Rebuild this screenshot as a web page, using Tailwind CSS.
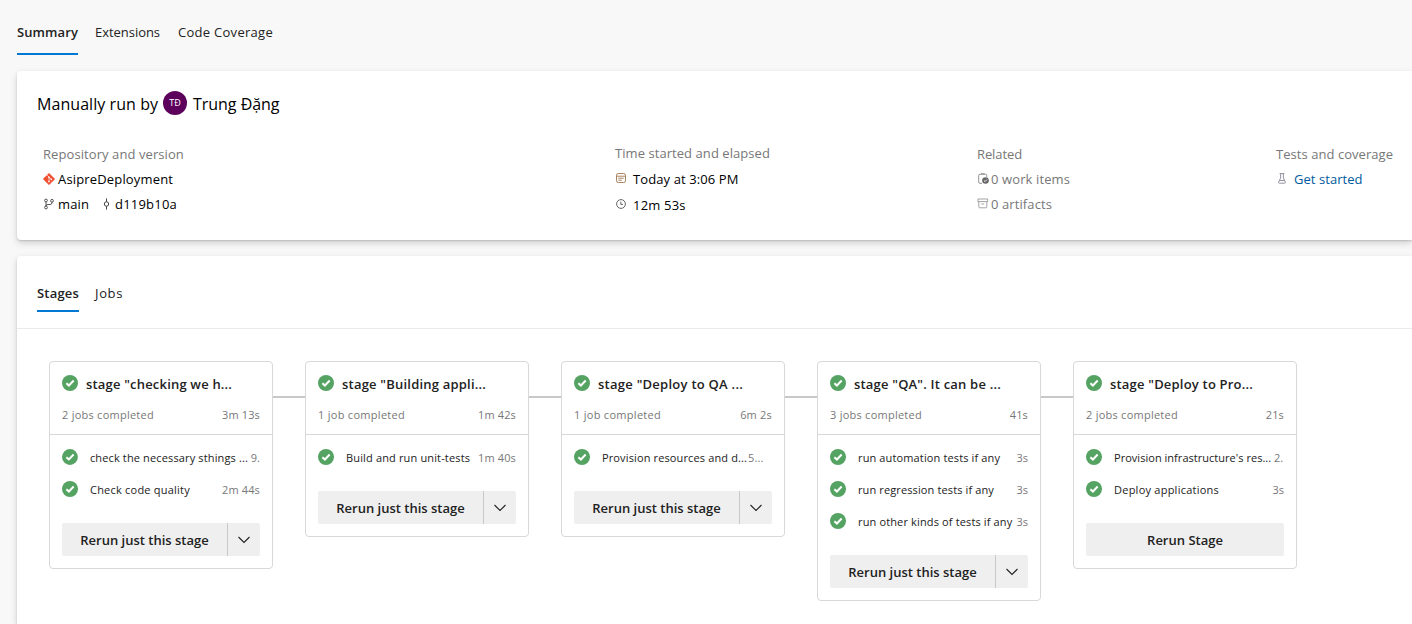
<!DOCTYPE html>
<html lang="en">
<head>
<meta charset="utf-8">
<title>Pipeline run summary</title>
<script src="https://cdn.jsdelivr.net/npm/@tailwindcss/browser@4"></script>
</head>
<body class="h-[624px] w-[1412px] overflow-hidden bg-[#f8f8f8] font-['Open_Sans','Noto_Sans',sans-serif] text-[13px] leading-5 text-black whitespace-nowrap">
<svg class="hidden">
  <symbol id="ok" viewBox="0 0 16 16"><circle cx="8" cy="8" r="8" fill="#55a362"/><path d="M4.4 8.2 6.9 10.5 11.7 5.5" fill="none" stroke="#fff" stroke-width="2"/></symbol>
  <symbol id="chev" viewBox="0 0 12 8"><path d="M.5 1 6 6.5 11.5 1" fill="none" stroke="#222" stroke-width="1.1"/></symbol>
</svg>

<nav class="flex h-[55px] gap-[17px] pl-[17px] pt-[22px] text-[#222]">
  <div class="h-[33px] w-[61px] border-b-2 border-[#0078d4] font-semibold tracking-[.1px]">Summary</div>
  <div class="w-[66px] tracking-[-.04px]">Extensions</div>
  <div class="tracking-[.28px]">Code Coverage</div>
</nav>

<section class="ml-[17px] mt-4 h-[169px] rounded-l bg-white pl-5 pt-5 shadow-[0_3px_7px_rgba(0,0,0,.16),0_1px_2px_rgba(0,0,0,.14)]">
  <div class="flex h-6 items-center text-base leading-6">
    <span class="w-[126px] pt-0.5 tracking-[.06px]">Manually run by</span>
    <span class="flex size-6 items-center justify-center rounded-full bg-[#5c005c] text-[9px] text-white">TĐ</span>
    <span class="ml-1.5 pt-0.5 tracking-[-.03px]">Trung Đặng</span>
  </div>
  <div class="mt-[27px] grid grid-cols-[572px_362px_299px_auto] pl-1.5 leading-[25px]">
    <div>
      <div class="tracking-[.08px] text-[#777]">Repository and version</div>
      <div class="flex items-center"><svg class="mr-[3px] size-3 -translate-y-px" viewBox="0 0 12 12"><path d="M6 .2 11.8 6 6 11.8.2 6Z" fill="#f05133" stroke="#f05133" stroke-width=".5" stroke-linejoin="round"/><path d="M4.2 2.2 6 4v5M6 4.3 8.3 6.4" fill="none" stroke="#fff" stroke-width=".7"/><circle cx="6" cy="4.2" r=".8" fill="#fff"/><circle cx="6" cy="8.6" r=".8" fill="#fff"/><circle cx="8.3" cy="6.4" r=".8" fill="#fff"/></svg><span class="tracking-[.16px]">AsipreDeployment</span></div>
      <div class="flex items-center"><svg class="ml-px mr-1 h-3 w-2.5 -translate-y-px" viewBox="0 0 10 12" fill="none" stroke="#444" stroke-width=".9"><circle cx="2" cy="2.5" r="1.4"/><circle cx="8" cy="2.8" r="1.4"/><circle cx="2" cy="9.5" r="1.4"/><path d="M2 4v4M8 4.2v.6Q8 6.5 6 6.5H4Q2 6.5 2 8"/></svg><span class="w-[43px] tracking-[.12px]">main</span><svg class="ml-0.5 mr-[5px] h-3 w-[7px] -translate-y-px" viewBox="0 0 7 12" fill="none" stroke="#444"><circle cx="3.5" cy="6" r="2.2"/><path d="M3.5.5v3.3M3.5 8.2v3.3"/></svg><span class="tracking-[.21px]">d119b10a</span></div>
    </div>
    <div class="-mt-px">
      <div class="tracking-[.06px] text-[#777]">Time started and elapsed</div>
      <div class="flex h-[26px] items-center"><svg class="ml-px mr-[7px] size-2.5 -translate-y-px" viewBox="0 0 10 10" fill="none" stroke="#a0764f" stroke-width=".9"><rect x=".5" y=".5" width="9" height="9" rx="1.8"/><path d="M.5 3.2h9M2.3 5.2h5.4M2.3 7.2h3.4"/></svg><span class="tracking-[.1px]">Today at 3:06 PM</span></div>
      <div class="flex h-[26px] items-center"><svg class="ml-px mr-[7px] size-2.5 -translate-y-px" viewBox="0 0 10 10" fill="none" stroke="#555" stroke-width=".9"><circle cx="5" cy="5" r="4.4"/><path d="M4.8 2.6v2.8h2.2"/></svg><span class="tracking-[.2px]">12m 53s</span></div>
    </div>
    <div class="text-[#777]">
      <div class="tracking-[-.1px]">Related</div>
      <div class="flex items-center"><svg class="ml-px mr-0.5 h-[11px] w-[11px] -translate-y-px" viewBox="0 0 11 11"><path d="M4 10.3H2A1.3 1.3 0 0 1 .7 9V2.5A1.3 1.3 0 0 1 2 1.2h5.5A1.3 1.3 0 0 1 8.8 2.5V4M3 .8h3.6" fill="none" stroke="#888" stroke-width=".9"/><circle cx="7.5" cy="7.5" r="3.3" fill="#666"/><path d="M6 7.6 7.1 8.6 9 6.5" fill="none" stroke="#fff" stroke-width=".9"/></svg><span class="tracking-[.11px]">0 work items</span></div>
      <div class="flex items-center"><svg class="mr-0.5 h-[11px] w-3 -translate-y-px" viewBox="0 0 12 11" fill="none" stroke="#999" stroke-width=".9"><path d="M.9 1h9.8v2.6H.9zM1.8 3.6V8.8a1 1 0 0 0 1 1h6a1 1 0 0 0 1-1V3.6M4.4 6h2.8"/></svg><span class="tracking-[.1px]">0 artifacts</span></div>
    </div>
    <div>
      <div class="tracking-[.05px] text-[#777]">Tests and coverage</div>
      <div class="flex items-center text-[#005a9e]"><svg class="ml-0.5 mr-2 h-[11px] w-2 -translate-y-px" viewBox="0 0 8 11" fill="none" stroke="#889" stroke-width=".9"><path d="M1.6.6h4.8M2.6.8V5L.6 9.2q-.3 1 .7 1h5.4q1 0 .7-1L5.4 5V.8M1.6 7.5h4.8"/></svg><span class="tracking-[.05px]">Get started</span></div>
    </div>
  </div>
</section>

<section class="ml-[17px] mt-4 h-[368px] rounded-tl bg-white shadow-[0_3px_7px_rgba(0,0,0,.16),0_1px_2px_rgba(0,0,0,.14)]">
  <div class="flex h-[73px] gap-4 border-b border-[#eaeaea] pl-5 pt-[27px] text-[#222]">
    <div class="h-[29px] w-[42px] border-b-2 border-[#0078d4] font-semibold tracking-[.19px]">Stages</div>
    <div class="tracking-[.65px]">Jobs</div>
  </div>

  <div class="flex items-start pl-8 pt-8 text-[11px] text-[#222]">
    <article class="w-56 rounded border border-[#d8d8d8]">
      <header class="h-[73px] border-b border-[#d8d8d8] px-3 pt-3">
        <div class="flex h-5 items-center"><svg class="mr-2 size-4 -translate-y-px"><use href="#ok"/></svg><span class="text-[13px] font-semibold tracking-[.19px]">stage "checking we h...</span></div>
        <div class="mt-[11px] flex justify-between text-[#777]"><span class="tracking-[.25px]">2 jobs completed</span><span class="tracking-[.14px]">3m 13s</span></div>
      </header>
      <div class="px-3 pt-1.5 pb-3">
        <div class="flex h-8 items-center"><svg class="mr-3 size-4"><use href="#ok"/></svg><span class="w-[162px] pt-0.5 tracking-[.14px]">check the necessary sthings ...</span><span class="pt-0.5 text-[#777]">9.</span></div>
        <div class="flex h-8 items-center"><svg class="mr-3 size-4"><use href="#ok"/></svg><span class="flex-1 pt-0.5 tracking-[.22px]">Check code quality</span><span class="pt-0.5 tracking-[.14px] text-[#777]">2m 44s</span></div>
        <div class="mt-[18px] flex h-[33px] items-center rounded-xs bg-[#efefef] text-[13px] font-semibold"><span class="w-[165px] text-center">Rerun just this stage</span><span class="flex h-full flex-1 items-center justify-center border-l border-[#c8c8c8]"><svg class="h-2 w-3"><use href="#chev"/></svg></span></div>
      </div>
    </article>
    <div class="mt-[35px] h-0.5 w-8 bg-[#c8c8c8]"></div>

    <article class="w-56 rounded border border-[#d8d8d8]">
      <header class="h-[73px] border-b border-[#d8d8d8] px-3 pt-3">
        <div class="flex h-5 items-center"><svg class="mr-2 size-4 -translate-y-px"><use href="#ok"/></svg><span class="text-[13px] font-semibold tracking-[.21px]">stage "Building appli...</span></div>
        <div class="mt-[11px] flex justify-between text-[#777]"><span class="tracking-[.29px]">1 job completed</span><span class="tracking-[.14px]">1m 42s</span></div>
      </header>
      <div class="px-3 pt-1.5 pb-3">
        <div class="flex h-8 items-center"><svg class="mr-3 size-4"><use href="#ok"/></svg><span class="flex-1 pt-0.5 tracking-[.15px]">Build and run unit-tests</span><span class="pt-0.5 tracking-[.14px] text-[#777]">1m 40s</span></div>
        <div class="mt-[18px] flex h-[33px] items-center rounded-xs bg-[#efefef] text-[13px] font-semibold"><span class="w-[165px] text-center">Rerun just this stage</span><span class="flex h-full flex-1 items-center justify-center border-l border-[#c8c8c8]"><svg class="h-2 w-3"><use href="#chev"/></svg></span></div>
      </div>
    </article>
    <div class="mt-[35px] h-0.5 w-8 bg-[#c8c8c8]"></div>

    <article class="w-56 rounded border border-[#d8d8d8]">
      <header class="h-[73px] border-b border-[#d8d8d8] px-3 pt-3">
        <div class="flex h-5 items-center"><svg class="mr-2 size-4 -translate-y-px"><use href="#ok"/></svg><span class="text-[13px] font-semibold tracking-[.26px]">stage "Deploy to QA ...</span></div>
        <div class="mt-[11px] flex justify-between text-[#777]"><span class="tracking-[.29px]">1 job completed</span><span class="tracking-[.2px]">6m 2s</span></div>
      </header>
      <div class="px-3 pt-1.5 pb-3">
        <div class="flex h-8 items-center"><svg class="mr-3 size-4"><use href="#ok"/></svg><span class="w-[146px] pt-0.5 tracking-[.13px]">Provision resources and d...</span><span class="pt-0.5 tracking-[.14px] text-[#777]">5...</span></div>
        <div class="mt-[18px] flex h-[33px] items-center rounded-xs bg-[#efefef] text-[13px] font-semibold"><span class="w-[165px] text-center">Rerun just this stage</span><span class="flex h-full flex-1 items-center justify-center border-l border-[#c8c8c8]"><svg class="h-2 w-3"><use href="#chev"/></svg></span></div>
      </div>
    </article>
    <div class="mt-[35px] h-0.5 w-8 bg-[#c8c8c8]"></div>

    <article class="w-56 rounded border border-[#d8d8d8]">
      <header class="h-[73px] border-b border-[#d8d8d8] px-3 pt-3">
        <div class="flex h-5 items-center"><svg class="mr-2 size-4 -translate-y-px"><use href="#ok"/></svg><span class="text-[13px] font-semibold tracking-[.2px]">stage "QA". It can be ...</span></div>
        <div class="mt-[11px] flex justify-between text-[#777]"><span class="tracking-[.25px]">3 jobs completed</span><span class="tracking-[.14px]">41s</span></div>
      </header>
      <div class="px-3 pt-1.5 pb-3">
        <div class="flex h-8 items-center"><svg class="mr-3 size-4"><use href="#ok"/></svg><span class="flex-1 pt-0.5 tracking-[.13px]">run automation tests if any</span><span class="pt-0.5 text-[#777]">3s</span></div>
        <div class="flex h-8 items-center"><svg class="mr-3 size-4"><use href="#ok"/></svg><span class="flex-1 pt-0.5 tracking-[.12px]">run regression tests if any</span><span class="pt-0.5 text-[#777]">3s</span></div>
        <div class="flex h-8 items-center"><svg class="mr-3 size-4"><use href="#ok"/></svg><span class="flex-1 pt-0.5 tracking-[.14px]">run other kinds of tests if any</span><span class="pt-0.5 text-[#777]">3s</span></div>
        <div class="mt-[18px] flex h-[33px] items-center rounded-xs bg-[#efefef] text-[13px] font-semibold"><span class="w-[165px] text-center">Rerun just this stage</span><span class="flex h-full flex-1 items-center justify-center border-l border-[#c8c8c8]"><svg class="h-2 w-3"><use href="#chev"/></svg></span></div>
      </div>
    </article>
    <div class="mt-[35px] h-0.5 w-8 bg-[#c8c8c8]"></div>

    <article class="w-56 rounded border border-[#d8d8d8]">
      <header class="h-[73px] border-b border-[#d8d8d8] px-3 pt-3">
        <div class="flex h-5 items-center"><svg class="mr-2 size-4 -translate-y-px"><use href="#ok"/></svg><span class="text-[13px] font-semibold tracking-[.2px]">stage "Deploy to Pro...</span></div>
        <div class="mt-[11px] flex justify-between text-[#777]"><span class="tracking-[.25px]">2 jobs completed</span><span class="tracking-[.14px]">21s</span></div>
      </header>
      <div class="px-3 pt-1.5 pb-3">
        <div class="flex h-8 items-center"><svg class="mr-3 size-4"><use href="#ok"/></svg><span class="w-[160px] pt-0.5 tracking-[.03px]">Provision infrastructure's res...</span><span class="pt-0.5 text-[#777]">2.</span></div>
        <div class="flex h-8 items-center"><svg class="mr-3 size-4"><use href="#ok"/></svg><span class="flex-1 pt-0.5 tracking-[.24px]">Deploy applications</span><span class="pt-0.5 text-[#777]">3s</span></div>
        <div class="mt-[18px] flex h-[33px] items-center justify-center rounded-xs bg-[#efefef] text-[13px] font-semibold">Rerun Stage</div>
      </div>
    </article>
  </div>
</section>
</body>
</html>
